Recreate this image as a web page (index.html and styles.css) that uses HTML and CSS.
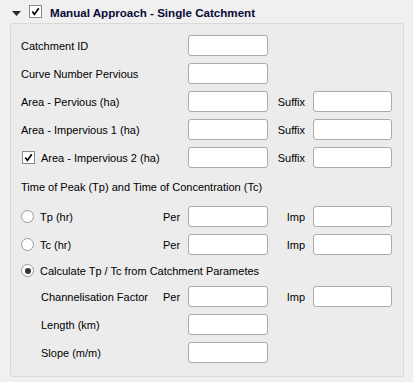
FILE: index.html
```html
<!DOCTYPE html>
<html>
<head>
<meta charset="utf-8">
<link rel="stylesheet" href="styles.css">
</head>
<body>
<div class="header">
  <svg class="arrow" width="9" height="5" viewBox="0 0 9 5"><polygon points="0,0 9,0 4.5,5" fill="#2b2b2b"/></svg>
  <span class="check header-check"><svg width="11" height="11" viewBox="0 0 11 11"><path d="M2.3 5.6 L4.4 8.4 L8.8 2.2" fill="none" stroke="#000" stroke-width="1.7"/></svg></span>
  <span class="title">Manual Approach - Single Catchment</span>
</div>
<div class="group">
  <div class="grid">
    <div class="lbl">Catchment ID</div>
    <div class="inp c3"></div>

    <div class="lbl">Curve Number Pervious</div>
    <div class="inp c3"></div>

    <div class="lbl">Area - Pervious (ha)</div>
    <div class="inp c3"></div>
    <div class="side">Suffix</div>
    <div class="inp c5"></div>

    <div class="lbl">Area - Impervious 1 (ha)</div>
    <div class="inp c3"></div>
    <div class="side">Suffix</div>
    <div class="inp c5"></div>

    <div class="lbl opt"><span class="check"><svg width="11" height="11" viewBox="0 0 11 11"><path d="M2.3 5.6 L4.4 8.4 L8.8 2.2" fill="none" stroke="#000" stroke-width="1.7"/></svg></span>Area - Impervious 2 (ha)</div>
    <div class="inp c3"></div>
    <div class="side">Suffix</div>
    <div class="inp c5"></div>

    <div class="full heading">Time of Peak (Tp) and Time of Concentration (Tc)</div>

    <div class="lbl one opt"><span class="radio"></span>Tp (hr)</div>
    <div class="per">Per</div>
    <div class="inp c3"></div>
    <div class="side">Imp</div>
    <div class="inp c5"></div>

    <div class="lbl one opt"><span class="radio"></span>Tc (hr)</div>
    <div class="per">Per</div>
    <div class="inp c3"></div>
    <div class="side">Imp</div>
    <div class="inp c5"></div>

    <div class="full opt calc"><span class="radio on"></span>Calculate Tp / Tc from Catchment Parametes</div>

    <div class="lbl one sub">Channelisation Factor</div>
    <div class="per">Per</div>
    <div class="inp c3"></div>
    <div class="side">Imp</div>
    <div class="inp c5"></div>

    <div class="lbl sub">Length (km)</div>
    <div class="inp c3"></div>

    <div class="lbl sub">Slope (m/m)</div>
    <div class="inp c3"></div>
  </div>
</div>
</body>
</html>
```
FILE: styles.css
```css
html, body {
  margin: 0;
  padding: 0;
  background: #f0f0f0;
  font-family: "Liberation Sans", Arial, sans-serif;
  font-size: 11px;
  color: #000;
  width: 413px;
  height: 382px;
  overflow: hidden;
}
.header {
  height: 23px;
  display: flex;
  align-items: center;
  padding-left: 12px;
}
.arrow {
  margin-top: 4px;
  margin-right: 8px;
}
.check {
  box-sizing: border-box;
  width: 13px;
  height: 13px;
  border: 1px solid #8a8a8a;
  background: #fff;
  display: inline-flex;
  align-items: center;
  justify-content: center;
  flex: none;
}
.header-check {
  margin-right: 8px;
}
.title {
  font-weight: bold;
  font-size: 11.6px;
  color: #0a0a35;
  margin-top: 2px;
}
.group {
  margin-left: 10px;
  width: 394px;
  box-sizing: border-box;
  height: 354px;
  border: 1px solid #d9d9d9;
  border-radius: 2px;
  background: #ececec;
  padding: 11px 0 0 10px;
}
.grid {
  display: grid;
  grid-template-columns: 142px 25px 80px 45px 79px;
  grid-auto-rows: auto;
  row-gap: 7px;
  align-items: center;
}
.lbl {
  grid-column: 1 / 3;
  white-space: nowrap;
}
.lbl.one {
  grid-column: 1;
}
.per {
  grid-column: 2;
}
.inp {
  box-sizing: border-box;
  height: 21px;
  background: #fff;
  border: 1px solid #ababab;
  border-radius: 3px;
}
.c3 {
  grid-column: 3;
}
.c5 {
  grid-column: 5;
}
.side {
  grid-column: 4;
  text-align: right;
  padding-right: 8px;
}
.full {
  grid-column: 1 / -1;
  white-space: nowrap;
}
.heading {
  height: 24px;
  line-height: 24px;
}
.opt {
  display: flex;
  align-items: center;
}
.opt .check, .opt .radio {
  margin-right: 6px;
}
.opt .check {
  margin-left: 1px;
}
.radio {
  box-sizing: border-box;
  width: 13px;
  height: 13px;
  border-radius: 50%;
  border: 1px solid #999;
  background: #fff;
  display: inline-flex;
  align-items: center;
  justify-content: center;
  flex: none;
}
.radio.on::after {
  content: "";
  width: 6px;
  height: 6px;
  border-radius: 50%;
  background: #333;
}
.calc {
  height: 17px;
}
.sub {
  padding-left: 20px;
}
```
